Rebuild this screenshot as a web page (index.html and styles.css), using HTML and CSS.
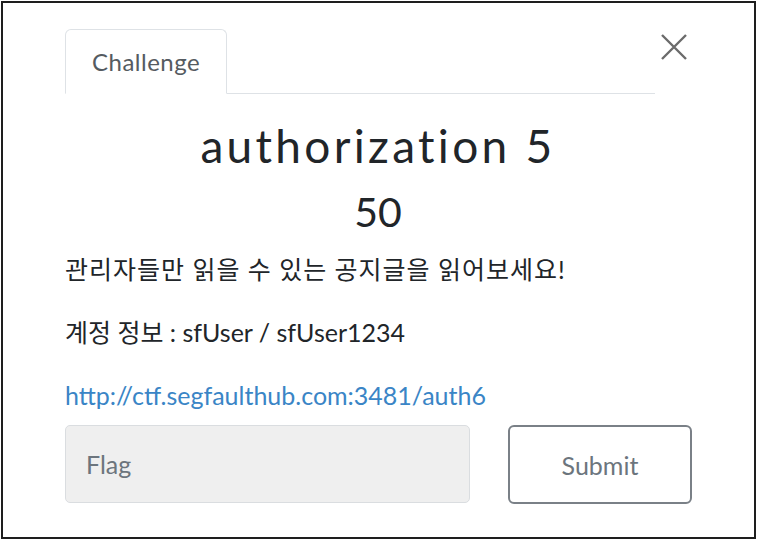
FILE: index.html
```html
<!DOCTYPE html>
<html lang="ko">
<head>
  <meta charset="UTF-8" />
  <meta name="viewport" content="width=device-width, initial-scale=1.0"/>
  <title>authorization 5</title>
  <link rel="stylesheet" href="styles.css">
</head>
<body>
  <div class="modal">
    <div class="modal-head">
      <ul class="tabs">
        <li class="tab active">Challenge</li>
      </ul>
      <button class="close" type="button" aria-label="Close">
        <svg width="26" height="26" viewBox="0 0 26 26">
          <path d="M1 1 L25 25 M25 1 L1 25" stroke="#6b6b6b" stroke-width="2.4" fill="none"/>
        </svg>
      </button>
    </div>

    <h2 class="chal-name">authorization 5</h2>
    <h3 class="chal-value">50</h3>

    <div class="chal-desc">
      <p class="ko">관리자들만 읽을 수 있는 공지글을 읽어보세요!</p>
      <p>계정 정보 : sfUser / sfUser1234</p>
      <p><a href="#">http://ctf.segfaulthub.com:3481/auth6</a></p>
    </div>

    <form class="flag-form" id="flagForm">
      <input type="text" class="flag-input" placeholder="Flag" />
      <button type="submit" class="submit-btn">Submit</button>
    </form>
  </div>
</body>
</html>
```

FILE: styles.css
```css
body {
  margin: 1px 1px 0 1px;
  font-family: 'Lato', 'Noto Sans CJK KR', sans-serif;
  background: #fff;
  color: #212529;
}

.modal {
  box-sizing: border-box;
  width: 755px;
  height: 538px;
  border: 2px solid #1e1e1e;
  padding: 26px 0 0 62px;
}

.modal-head {
  display: flex;
  align-items: flex-start;
}

.tabs {
  list-style: none;
  margin: 0;
  padding: 0;
  width: 590px;
  border-bottom: 1px solid #dee2e6;
  display: flex;
}

.tab {
  box-sizing: border-box;
  height: 65px;
  margin-bottom: -1px;
  padding: 0 26px;
  line-height: 64px;
  font-size: 24px;
  letter-spacing: 0.5px;
  color: #555b61;
  border: 1px solid #dee2e6;
  border-bottom-color: #fff;
  border-radius: 6px 6px 0 0;
  background: #fff;
}

.close {
  margin: 5px 0 0 6px;
  padding: 0;
  border: none;
  background: none;
  width: 26px;
  height: 26px;
  cursor: pointer;
}

.close svg {
  display: block;
}

.chal-name {
  width: 626px;
  margin: 24px 0 0 0;
  text-align: center;
  font-weight: 400;
  font-size: 46px;
  letter-spacing: 3.3px;
  line-height: 56px;
}

.chal-value {
  width: 626px;
  margin: 13px 0 0 0;
  text-align: center;
  font-weight: 400;
  font-size: 41px;
  line-height: 50px;
}

.chal-desc {
  margin-top: 18px;
  font-size: 25px;
  color: #212529;
}

.chal-desc p {
  margin: 0 0 35px 0;
  line-height: 28px;
}

.chal-desc .ko {
  letter-spacing: 1px;
}

.chal-desc a {
  color: #3a85c6;
  text-decoration: none;
}

.flag-form {
  display: flex;
  gap: 38px;
  margin-top: -19px;
}

.flag-input {
  box-sizing: border-box;
  width: 405px;
  height: 78px;
  padding: 0 20px;
  font-family: 'Lato', sans-serif;
  font-size: 25px;
  background: #efefef;
  border: 1px solid #dadde0;
  border-radius: 5px;
}

.flag-input::placeholder {
  color: #6c757d;
}

.submit-btn {
  box-sizing: border-box;
  width: 184px;
  height: 79px;
  font-family: 'Lato', sans-serif;
  font-size: 25px;
  color: #6c757d;
  background: #fff;
  border: 2px solid #7a8087;
  border-radius: 6px;
  cursor: pointer;
}
```
